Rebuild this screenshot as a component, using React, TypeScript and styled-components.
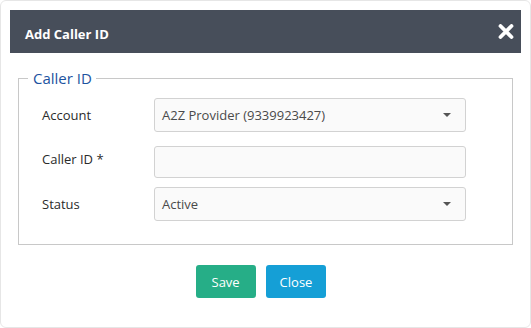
import React from 'react';
import styled, { createGlobalStyle } from 'styled-components';

const GlobalStyle = createGlobalStyle`
  html, body {
    margin: 0;
    padding: 0;
    background: #fff;
  }
  body {
    font-family: "Open Sans", "Liberation Sans", sans-serif;
    font-size: 13px;
    color: #333;
  }
`;

const Modal = styled.div`
  box-sizing: border-box;
  width: 531px;
  height: 328px;
  padding: 10px 10px 0 10px;
  background: #fff;
  border: 1px solid #e6e6e6;
  border-radius: 6px;
  display: flex;
  flex-direction: column;
`;

const Header = styled.div`
  box-sizing: border-box;
  height: 43px;
  margin: -1px -1px 0 -1px;
  padding: 4px 7px 0 15px;
  background: #474e5a;
  display: flex;
  align-items: center;
  justify-content: space-between;
`;

const Title = styled.h4`
  margin: 0;
  font-size: 13px;
  font-weight: 700;
  color: #fff;
`;

const CloseIcon = styled.button`
  border: 0;
  background: none;
  padding: 0;
  margin-top: -4px;
  display: flex;
  cursor: pointer;
`;

const Body = styled.div`
  padding: 15px 7px 0 7px;
`;

const Fieldset = styled.fieldset`
  margin: 0;
  padding: 10px 46px 23px 23px;
  border: 1px solid #c8c8c8;
  min-width: 0;
`;

const Legend = styled.legend`
  margin-left: -14px;
  padding: 0 4px 0 5px;
  font-size: 15px;
  line-height: 20px;
  color: #1d53a0;
`;

const Row = styled.div<{ $gap: number }>`
  display: grid;
  grid-template-columns: 112px 1fr;
  align-items: center;
  margin-bottom: ${p => p.$gap}px;
`;

const Label = styled.label<{ $up?: number }>`
  font-size: 13px;
  color: #2b2b2b;
  position: relative;
  top: ${p => -(p.$up || 0)}px;
`;

const Control = styled.div<{ $h: number }>`
  box-sizing: border-box;
  height: ${p => p.$h}px;
  border: 1px solid #d2d2d2;
  border-radius: 3px;
  background: #fafafa;
  padding: 0 14px 0 7px;
  display: flex;
  align-items: center;
  justify-content: space-between;
  color: #4a4a4a;
  font-size: 13px;
`;

const Caret = styled.span`
  width: 0;
  height: 0;
  border-left: 4px solid transparent;
  border-right: 4px solid transparent;
  border-top: 4px solid #555;
`;

const Footer = styled.div`
  display: flex;
  justify-content: center;
  gap: 10px;
  padding: 20px 9px 0 0;
`;

const Button = styled.button<{ $color: string }>`
  min-width: 60px;
  height: 33px;
  padding: 0 14px;
  border: 0;
  border-radius: 3px;
  background: ${p => p.$color};
  color: #fff;
  font-family: "Open Sans", "Liberation Sans", sans-serif;
  font-size: 13px;
  cursor: pointer;
`;

function App() {
  return (
    <>
      <GlobalStyle />
      <Modal>
        <Header>
          <Title>Add Caller ID</Title>
          <CloseIcon aria-label="close">
            <svg width="16" height="15" viewBox="0 0 16 15">
              <path d="M2.5 2 L13.5 13 M13.5 2 L2.5 13" stroke="#fff" strokeWidth="3.8" strokeLinecap="round" />
            </svg>
          </CloseIcon>
        </Header>
        <Body>
          <Fieldset>
            <Legend>Caller ID</Legend>
            <Row $gap={14}>
              <Label>Account</Label>
              <Control $h={34}>
                <span>A2Z Provider (9339923427)</span>
                <Caret />
              </Control>
            </Row>
            <Row $gap={9}>
              <Label $up={3}>Caller ID *</Label>
              <Control $h={32} />
            </Row>
            <Row $gap={0}>
              <Label>Status</Label>
              <Control $h={34}>
                <span>Active</span>
                <Caret />
              </Control>
            </Row>
          </Fieldset>
        </Body>
        <Footer>
          <Button $color="#26ae87">Save</Button>
          <Button $color="#159fd6">Close</Button>
        </Footer>
      </Modal>
    </>
  );
}

export default App;
